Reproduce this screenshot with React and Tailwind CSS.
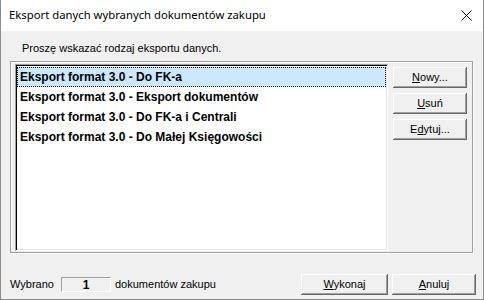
import React from 'react'

const ui = { fontFamily: '"Liberation Sans", Arial, sans-serif' }

const rows = [
  'Eksport format 3.0 - Do FK-a',
  'Eksport format 3.0 - Eksport dokumentów',
  'Eksport format 3.0 - Do FK-a i Centrali',
  'Eksport format 3.0 - Do Małej Księgowości',
]

function Btn({ children, className = '' }) {
  return (
    <button
      className={`h-[21px] bg-[#f0f0f0] text-[11px] text-black flex items-center justify-center shadow-[inset_-1px_-1px_0_#696969,inset_1px_1px_0_#fff,inset_-2px_-2px_0_#a0a0a0] ${className}`}
      style={ui}
    >
      {children}
    </button>
  )
}

export default function App() {
  return (
    <div className="w-[484px] h-[300px] flex flex-col border-l border-r border-b border-[#8c8c8c] bg-[#f0f0f0] text-black" style={ui}>
      {/* Title bar */}
      <div className="h-[31px] bg-white flex items-center pl-[8px] pr-[10px]">
        <span className="text-[11.3px] flex-1" style={{ fontFamily: '"Noto Sans", "Open Sans", sans-serif' }}>
          Eksport danych wybranych dokumentów zakupu
        </span>
        <svg width="11" height="11" viewBox="0 0 11 11" className="mr-[1px]">
          <path d="M0.5 0.5 L10.5 10.5 M10.5 0.5 L0.5 10.5" stroke="#000" strokeWidth="1" />
        </svg>
      </div>

      {/* Body */}
      <div className="flex-1 flex flex-col pl-[9px] pt-[11px]">
        <div className="pl-[12px] h-[13px] leading-[13px] text-[11px]">Proszę wskazać rodzaj eksportu danych.</div>

        {/* Group frame */}
        <div className="mt-[6px] w-[463px] h-[192px] border border-[#a0a0a0] shadow-[1px_1px_0_#fff,inset_1px_1px_0_#fff] flex pl-[4px] pt-[2px]">
          <div className="w-[373px] h-[187px] bg-white shadow-[inset_1px_1px_0_#a0a0a0,inset_-1px_-1px_0_#fff,inset_2px_2px_0_#000,inset_-2px_-2px_0_#e3e3e3] pl-[2px] pr-[2px] pt-[3px]">
            {rows.map((r, i) => (
              <div
                key={r}
                className={`h-[20px] flex items-center pl-[2px] text-[12px] font-bold ${i === 0 ? 'bg-[#cce8ff] border border-dotted border-black' : 'border border-transparent'}`}
              >
                {r}
              </div>
            ))}
          </div>

          <div className="ml-[5px] mt-[3px] flex flex-col gap-[5px]">
            <Btn className="w-[74px]"><span><u>N</u>owy...</span></Btn>
            <Btn className="w-[74px]"><span><u>U</u>suń</span></Btn>
            <Btn className="w-[74px]"><span>E<u>d</u>ytuj...</span></Btn>
          </div>
        </div>

        {/* Bottom row */}
        <div className="mt-[21px] flex items-center w-[466px]">
          <span className="text-[11px] w-[51px]">Wybrano</span>
          <div className="w-[50px] h-[15px] border border-t-[#a0a0a0] border-l-[#a0a0a0] border-b-white border-r-white flex items-center justify-center text-[12px] font-bold">
            1
          </div>
          <span className="text-[11px] ml-[4px]">dokumentów zakupu</span>
          <Btn className="ml-auto w-[87px]"><span><u>W</u>ykonaj</span></Btn>
          <Btn className="ml-[4px] w-[84px]"><span><u>A</u>nuluj</span></Btn>
        </div>
      </div>
    </div>
  )
}
